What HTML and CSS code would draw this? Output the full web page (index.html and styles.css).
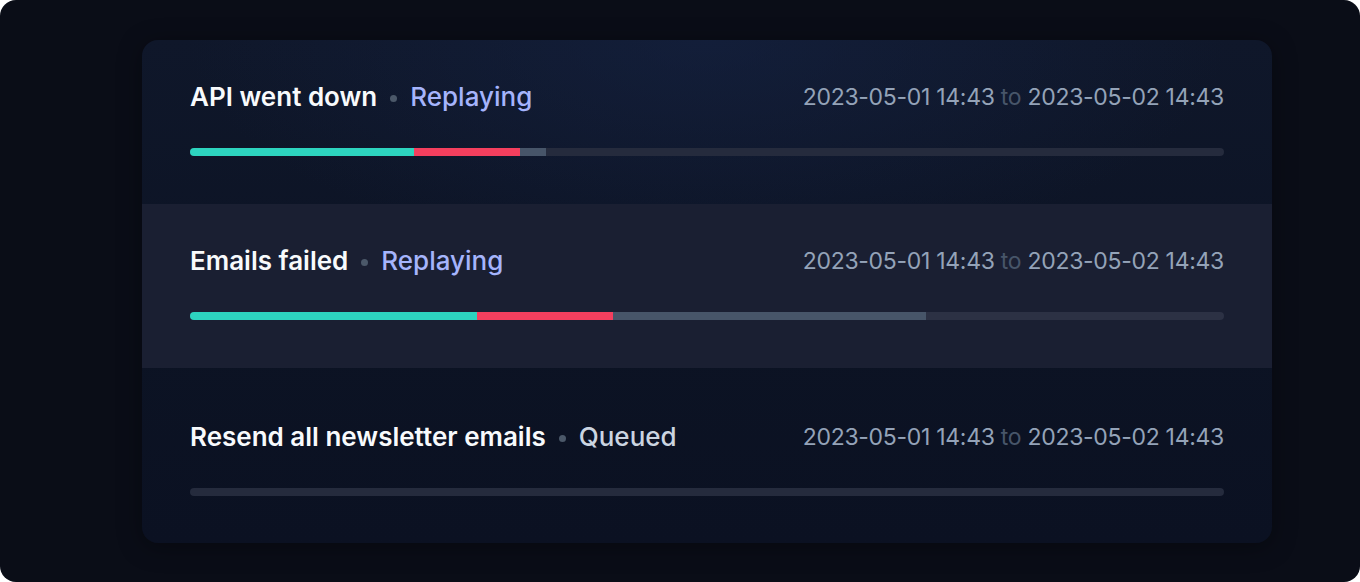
FILE: index.html
```html
<!DOCTYPE html>
<html lang="en">
<head>
<meta charset="utf-8">
<title>Replays</title>
<link rel="stylesheet" href="styles.css">
</head>
<body>
<div class="frame">
  <div class="card">
    <div class="row">
      <div class="head">
        <div class="title"><span class="name">API went down</span><span class="dot"></span><span class="status replaying">Replaying</span></div>
        <div class="dates">2023-05-01 14:43 <span class="to">to</span> 2023-05-02 14:43</div>
      </div>
      <div class="bar">
        <span class="seg ok" style="width:21.7%"></span><span class="seg fail" style="width:10.25%"></span><span class="seg pending" style="width:2.5%"></span>
      </div>
    </div>
    <div class="row active">
      <div class="head">
        <div class="title"><span class="name">Emails failed</span><span class="dot"></span><span class="status replaying">Replaying</span></div>
        <div class="dates">2023-05-01 14:43 <span class="to">to</span> 2023-05-02 14:43</div>
      </div>
      <div class="bar">
        <span class="seg ok" style="width:27.75%"></span><span class="seg fail" style="width:13.15%"></span><span class="seg pending" style="width:30.3%"></span>
      </div>
    </div>
    <div class="row last">
      <div class="head">
        <div class="title"><span class="name">Resend all newsletter emails</span><span class="dot"></span><span class="status queued">Queued</span></div>
        <div class="dates">2023-05-01 14:43 <span class="to">to</span> 2023-05-02 14:43</div>
      </div>
      <div class="bar"></div>
    </div>
  </div>
</div>
</body>
</html>
```
FILE: styles.css
```css
html, body {
  margin: 0;
  padding: 0;
  background: #ffffff;
}
body {
  font-family: Inter, "Noto Sans", "Liberation Sans", sans-serif;
}
.frame {
  width: 1360px;
  height: 582px;
  box-sizing: border-box;
  border-radius: 16px;
  background: #0a0d17;
  padding: 40px 88px 39px 142px;
}
.card {
  width: 1130px;
  height: 503px;
  border-radius: 16px;
  overflow: hidden;
  background:
    radial-gradient(ellipse 520px 220px at 50% 0%, rgba(22, 36, 70, 0.55), rgba(22, 36, 70, 0) 100%),
    linear-gradient(180deg, #0f172a 0%, #0c1324 60%, #0b1122 100%);
  box-shadow: 0 4px 24px rgba(0, 0, 0, 0.35);
  display: flex;
  flex-direction: column;
}
.row {
  height: 164px;
  box-sizing: border-box;
  padding: 40px 48px 0 48px;
}
.row.active {
  background: #1a1f32;
}
.row.last {
  flex: 1;
  padding-top: 52px;
}
.head {
  display: flex;
  justify-content: space-between;
  align-items: center;
  height: 34px;
}
.title {
  display: flex;
  align-items: center;
  font-size: 26px;
  line-height: 34px;
  letter-spacing: 0;
}
.name {
  color: #f8fafc;
  font-weight: 600;
}
.dot {
  width: 7px;
  height: 7px;
  border-radius: 50%;
  background: #4b5869;
  margin: 2px 13px 0 13px;
}
.status {
  font-weight: 500;
}
.status.replaying {
  color: #a5b4fc;
}
.status.queued {
  color: #cbd5e1;
}
.dates {
  color: #94a3b8;
  font-size: 23px;
  line-height: 34px;
  letter-spacing: -0.3px;
}
.to {
  color: #475569;
}
.bar {
  margin-top: 34px;
  height: 8px;
  border-radius: 4px;
  background: #252b3d;
  overflow: hidden;
  display: flex;
}
.row.active .bar {
  background: #2c3144;
}
.seg {
  height: 100%;
}
.seg.ok {
  background: #2dd4bf;
}
.seg.fail {
  background: #f43f5e;
}
.seg.pending {
  background: #475569;
}
```
